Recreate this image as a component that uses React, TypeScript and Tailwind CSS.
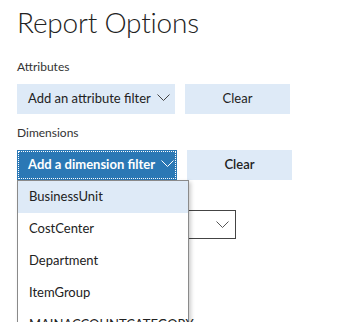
const Chevron = ({ className }: { className?: string }) => (
  <svg className={className} width="13" height="8" viewBox="0 0 13 8" fill="none">
    <path d="M0.5 0.5 L6.5 6.5 L12.5 0.5" stroke="currentColor" strokeWidth="1" />
  </svg>
);

const options = ["BusinessUnit", "CostCenter", "Department", "ItemGroup", "MAINACCOUNTCATEGORY"];

export default function App() {
  return (
    <div className="relative h-[322px] w-[348px] overflow-hidden bg-white pl-[17px] font-['Lato',sans-serif] text-[#333]">
      <h1 className="pt-[2px] text-[28px] font-light leading-[40px] tracking-[-0.2px] text-[#222]">Report Options</h1>

      <p className="mt-[18px] text-[12px] leading-[14px] text-[#333]">Attributes</p>
      <div className="mt-[10px] flex gap-[10px]">
        <button className="flex h-[30px] w-[158px] items-center gap-[6px] whitespace-nowrap bg-[#deeaf7] pl-[11px] text-[13px] text-[#222]">
          Add an attribute filter
          <Chevron className="mb-[3px] text-[#444]" />
        </button>
        <button className="h-[30px] w-[105px] bg-[#deeaf7] text-[13px] text-[#222]">Clear</button>
      </div>

      <p className="mt-[12px] text-[12px] leading-[14px] text-[#333]">Dimensions</p>
      <div className="mt-[10px] flex gap-[10px]">
        <button className="flex h-[30px] w-[160px] items-center gap-[6px] whitespace-nowrap bg-[#2b78b5] pl-[11px] text-[13px] font-bold text-white outline-1 outline-offset-[-2px] outline-dotted outline-white">
          Add a dimension filter
          <Chevron className="mb-[3px] text-white" />
        </button>
        <button className="h-[30px] w-[105px] bg-[#deeaf7] text-[13px] font-semibold text-[#222]">Clear</button>
      </div>

      <div className="mt-[30px] flex h-[29px] w-[219px] items-center justify-end border border-[#444] pr-[6px]">
        <Chevron className="text-[#555]" />
      </div>

      <ul className="absolute top-[180px] left-[17px] w-[172px] border border-[#8a8a8a] bg-white shadow-[2px_2px_4px_rgba(0,0,0,0.2)]">
        {options.map((o, i) => (
          <li
            key={o}
            className={`flex h-[32px] items-center whitespace-nowrap pl-[11px] text-[13px] text-[#222] ${i === 0 ? "bg-[#deeaf7]" : ""}`}
          >
            {o}
          </li>
        ))}
      </ul>
    </div>
  );
}
